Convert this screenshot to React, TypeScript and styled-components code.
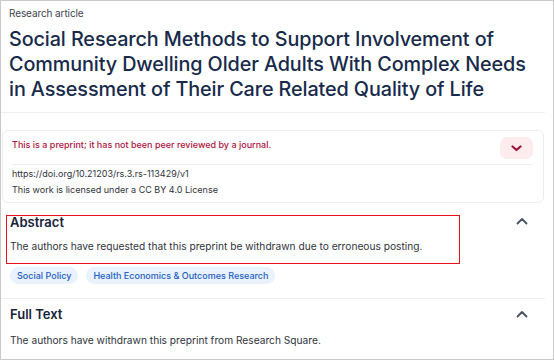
import React from 'react';
import styled, { createGlobalStyle } from 'styled-components';

const GlobalStyle = createGlobalStyle`
  html, body {
    margin: 0;
    padding: 0;
    background: #ffffff;
  }
  * {
    box-sizing: border-box;
  }
`;

// Styles
const Frame = styled.div`
  width: 554px;
  height: 360px;
  border: 1px solid #c9c9c9;
  overflow: hidden;
  font-family: Inter, 'Liberation Sans', sans-serif;
  color: #2b2f36;
  background: #fff;
`;

const Header = styled.header`
  padding: 6px 8px 10px 8px;
`;

const Kicker = styled.div`
  font-size: 10px;
  line-height: 13px;
  color: #3c4350;
  letter-spacing: -0.1px;
`;

const Title = styled.h1`
  margin: 7px 0 0 0;
  font-size: 19.8px;
  line-height: 25px;
  font-weight: 500;
  color: #172a4a;
  letter-spacing: -0.1px;
`;

const Divider = styled.hr<{ $inset?: boolean }>`
  border: 0;
  height: 1px;
  background: #efefef;
  margin: ${(p) => (p.$inset ? '0 10px 0 9px' : '0 8px 0 0')};
`;

const NoticeCard = styled.section`
  margin: 17px 9px 0 1px;
  border: 1px solid #ececec;
  border-radius: 6px;
  padding-bottom: 4px;
`;

const NoticeHead = styled.div`
  display: flex;
  align-items: flex-start;
  justify-content: space-between;
  padding: 6px 10px 5px 9px;
`;

const NoticeText = styled.span`
  margin-top: 2px;
  font-size: 9px;
  line-height: 12px;
  font-weight: 500;
  color: #b0133d;
`;

const ToggleButton = styled.button`
  width: 33px;
  height: 22px;
  border: 0;
  border-radius: 7px;
  background: #fdecee;
  display: flex;
  align-items: center;
  justify-content: center;
  padding: 0;
`;

const Meta = styled.div`
  padding: 1px 9px 0 9px;
  font-size: 9px;
  line-height: 16px;
  color: #2f333a;
`;

const Section = styled.section`
  padding: 0 8px 0 0;
`;

const SectionHead = styled.div`
  display: flex;
  align-items: center;
  justify-content: space-between;
`;

const AbstractHead = styled(SectionHead)`
  margin-top: 12px;
  align-items: flex-start;
`;

const Highlight = styled.div`
  margin-left: 5px;
  width: 454px;
  height: 49px;
  border: 1.5px solid #e8101c;
  padding: 0 3px;
`;

const SectionTitle = styled.h2<{ $tight?: boolean }>`
  margin: 0;
  font-size: 13px;
  line-height: ${(p) => (p.$tight ? '13px' : '18px')};
  font-weight: 600;
  color: #17233a;
`;

const Body = styled.p`
  margin: 0;
  font-size: 10.2px;
  line-height: 14px;
  color: #30343b;
`;

const AbstractBody = styled(Body)`
  margin-top: 9.5px;
`;

const Caret = styled.span<{ $gap: number; $top?: number }>`
  margin-right: ${(p) => p.$gap}px;
  margin-top: ${(p) => p.$top ?? 0}px;
  display: flex;
`;

const TagRow = styled.div`
  display: flex;
  gap: 8px;
  padding: 3px 0 14px 9px;
`;

const Tag = styled.span`
  display: inline-flex;
  align-items: center;
  height: 17px;
  padding: 0 7px;
  border-radius: 9px;
  background: #eaf2fd;
  color: #2360c2;
  font-size: 9px;
  font-weight: 500;
`;

const FullText = styled.div`
  padding: 6px 0 0 9px;
`;

const FullBody = styled(Body)`
  margin-top: 10px;
`;

const ChevronDown = () => (
  <svg width="11" height="7" viewBox="0 0 11 7">
    <path d="M1.5 1.5 L5.5 5 L9.5 1.5" fill="none" stroke="#a3123a" strokeWidth="2.2" strokeLinecap="round" strokeLinejoin="round" />
  </svg>
);

const ChevronUp = () => (
  <svg width="12" height="8" viewBox="0 0 12 8">
    <path d="M1.5 6.5 L6 2 L10.5 6.5" fill="none" stroke="#4a5261" strokeWidth="1.8" strokeLinecap="round" strokeLinejoin="round" />
  </svg>
);

const App: React.FC = () => {
  return (
    <>
      <GlobalStyle />
      <Frame>
        <Header>
          <Kicker>Research article</Kicker>
          <Title>
            Social Research Methods to Support Involvement of
            <br />
            Community Dwelling Older Adults With Complex Needs
            <br />
            in Assessment of Their Care Related Quality of Life
          </Title>
        </Header>
        <Divider />

        <NoticeCard>
          <NoticeHead>
            <NoticeText>This is a preprint; it has not been peer reviewed by a journal.</NoticeText>
            <ToggleButton aria-label="Toggle">
              <ChevronDown />
            </ToggleButton>
          </NoticeHead>
          <Divider $inset />
          <Meta>
            <div>https://doi.org/10.21203/rs.3.rs-113429/v1</div>
            <div>This work is licensed under a CC BY 4.0 License</div>
          </Meta>
        </NoticeCard>

        <Section>
          <AbstractHead>
            <Highlight>
              <SectionTitle $tight>Abstract</SectionTitle>
              <AbstractBody>
                The authors have requested that this preprint be withdrawn due to erroneous posting.
              </AbstractBody>
            </Highlight>
            <Caret $gap={17} $top={2}>
              <ChevronUp />
            </Caret>
          </AbstractHead>
        </Section>

        <TagRow>
          <Tag>Social Policy</Tag>
          <Tag>Health Economics &amp; Outcomes Research</Tag>
        </TagRow>
        <Divider />

        <FullText>
          <SectionHead>
            <SectionTitle>Full Text</SectionTitle>
            <Caret $gap={25}>
              <ChevronUp />
            </Caret>
          </SectionHead>
          <FullBody>The authors have withdrawn this preprint from Research Square.</FullBody>
        </FullText>
      </Frame>
    </>
  );
};

export default App;
